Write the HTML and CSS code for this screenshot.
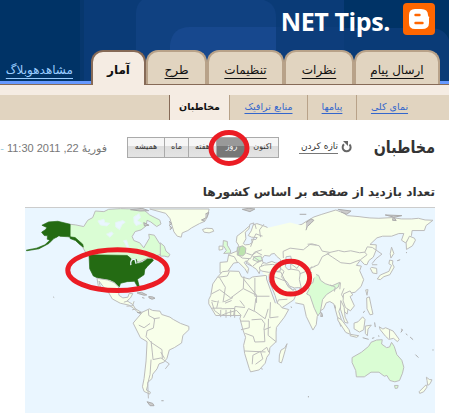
FILE: index.html
```
<!DOCTYPE html>
<html lang="fa" dir="rtl">
<head>
<meta charset="utf-8">
<title>NET Tips.</title>
<link rel="stylesheet" href="styles.css">
</head>
<body>
<header class="header">
  <svg class="header-art" width="449" height="84" viewBox="0 0 449 84">
    <path fill="#036" d="M0 0h449v84H0z"/>
    <path fill="#07376d" d="M80 0h4v84h-4z"/>
    <path fill="#0a3b77" d="M84 0h260v28h86q15 0 19 12v44H84z"/>
    <path fill="#104181" d="M136 84V13q0-8 6-13h122q12 4 12 17v67z"/>
    <path fill="#17488e" d="M170 84V45q2-18 20-18h86v57z"/>
    <path fill="#0d3d7b" d="M276 27h68v57h-68z"/>
  </svg>
  <div class="brand">
    <svg class="logo" width="32" height="32" viewBox="0 0 32 32">
      <rect width="32" height="32" rx="4" fill="#f60"/>
      <path fill="#fff" d="M12 6h6q7 0 7 6 0 2 1.500 2Q26 14 26 16v4q0 6-7 6h-7q-6 0-6-6v-8q0-6 6-6z"/>
      <path stroke="#f60" stroke-width="2.400" stroke-linecap="round" d="M12.500 12h4M12.500 20h7"/>
    </svg>
    <h1 class="title" dir="ltr">NET Tips.</h1>
  </div>
  <nav class="tabs">
    <a class="tab post">ارسال پیام</a>
    <a class="tab comments">نظرات</a>
    <a class="tab settings">تنظیمات</a>
    <a class="tab design">طرح</a>
    <a class="tab stats active">آمار</a>
    <a class="view">مشاهدهوبلاگ</a>
  </nav>
</header>
<nav class="subnav">
  <a class="sub overview">نمای کلی</a>
  <a class="sub posts">پیامها</a>
  <a class="sub traffic">منابع ترافیک</a>
  <a class="sub audience">مخاطبان</a>
</nav>
<main>
  <div class="toolbar">
    <h2 class="heading">مخاطبان</h2>
    <svg class="refresh" width="11" height="12" viewBox="0 0 11 12">
      <path fill="none" stroke="#666" stroke-width="2" d="M8.500 3.500A4 4 0 1 1 3 3.300"/>
      <path fill="#666" d="M2 0h5v5z"/>
    </svg>
    <a class="reload">تازه کردن</a>
    <div class="range">
      <span class="now">اکنون</span><span class="day">روز</span><span class="week">هفته</span><span class="month">ماه</span><span class="all">همیشه</span>
      <svg class="ring" width="42" height="38" viewBox="0 0 42 38"><ellipse cx="21" cy="19" rx="18" ry="15.500"/></svg>
    </div>
    <span class="date">فوریهٔ 22, 2011 11:30 <i>-</i></span>
  </div>
  <h3 class="caption">تعداد بازدید از صفحه بر اساس کشورها</h3>
  <svg class="map" width="410" height="206" viewBox="25 207 410 206">
    <g transform="translate(20 200) scale(.33333)">
      <path class="visited" d="M148 70l17 2 24 5 12-19 15-8 8-20 26 2 14-7 36-2 44 1 28 4 16 14 30 15 4 12-13 8-18-14-11-5-3 17-15 12-18 5-9 15 5 12 18 7 12 15 17-29-2-12 17 3 15 24 15 16 1 10-17 10-17 3-28 11-14 7-17-4-20-14-120-3-17-28-22-22-18-5z"/>
      <path class="ice" d="M232 60l18-5 2 10 15 2-8 8-20-3zM285 65l22-6 7 5-9 6-8 16-11-8zM258 100l15-7 5 6-10 10zM309 120l8 14 5 17 6-3-10-30zM340 48l16-10 4 12-10 9 14 8-17 7-6-10z"/>
      <path class="usa" d="M205 162l115 2 10 8 4 12 2-8 12 0 2 13 15-4 16-10 15-1 3 5-18 18-8 10-2 15-20 14 5 20-5 2-9-16-22 1-20 5-4 11-14-14-13-7-33-4-18-8-11-22z"/>
      <path class="usa" d="M148 70l-37-9-28 2-20 10 15 7-4 6-12 8 8 10 10 1-1 10 8 3-15 14-25 10-31 6 1 2 37-6 30-16 15-15 15-7 34 2 15 2 23 20 2 9-10-7-14-13-16-6z"/>
      <path class="lake" d="M96 124l20-17M331 193q-3-18 12-18M343 174l4 15"/>
      <path class="land" d="M229 233l32 5 20 8 13 13 1 25 12 8 15-2 4-11 11 0-7 13-10 9 17 11 8 13 17 10 14 0-5 6-15-2-16-15-14-10-27-6-24-13-11-19-17-19-12-16 6 26-8-12zM310 305l13-4M318 317l18-1 5-14M335 328l12-3"/>
      <path class="isle" d="M350 277l13-2 16 8-8 1-17-5zM385 288l12 1 7 4-9 3-9-4zM365 291l7 2M97 289l3 2M330 26l29 4 26-1-20-7zM370 65l16 8-14 2z"/>
    </g>
    <g transform="translate(160 200) scale(.33333)">
      <path class="visited" d="M0 126l12 10 5 15 12 10-5 8-12-3-12 0z"/>
      <path class="land" d="M-32 24H147l-5 23-8 14-16 7-24 13-11 8-17 7-3 13-12-3-10-13-6-20-6-20-13-16z"/>
      <path class="isle" d="M26 61l9 7-8 5 8 8-6 6M136 39l10-5-6 16-16 7 10 4M247 25l20-3 18 2-15 8z"/>
      <path class="land" d="M127 86l12-4 18 1 4 8-14 5-15-2zM177 136l12 0-1 10-11 2z"/>
      <path class="visited" d="M190 119l12 3 0 11 10 17-1 7-20 1 8-9-4-7-6-8z"/>
      <path class="land" d="M180 185l22-2 4-22 25-10 5-18-7-10 2-17 22-17 13-12 25-9 18 6 13 5 5 12-17-3 2 12 12 2 12-10 15-11 25-5 23 5 28-9 25-15 10 5v110H371l-12 10-16 3-22-4-14 8-5 14-4 16-8-13-13-9-19-17-5 6 13 17-3 15-8-14-19-19-15 2-13 18-8 14-20-2z"/>
      <path class="sea" d="M250 128l8-14-2-20 11-10 3-14 12-4-8 24-9 14 10 5 17 1-4 6-13-1 2 10-9 6-12 1z"/>
      <path class="germany" d="M232 140l16-5 10 7-2 16-8 8-16-3z"/>
      <path class="visited" d="M283 168l20-2 5 13-17 3-12-5z"/>
      <path class="land" d="M353 325L320 235l0-11-42 5-10 6-23-6-8-17-31-1-19 2-15 17-14 20-6 35-6 12 0 13 21 35H370z"/>
      <path class="border" d="M172 230l30-4 6-13M154 280l25-13 33 25M178 230l18 30-7 45M212 292l38-28 2-37M250 264l40 20v43M285 232v55h44M250 234l40 50M154 300l30 8 35-17M233 186l-10-18-17-5M241 136l-7 26 13 10 24 2 13-20 22-7M272 138l9-24 7-15 20 7 8-9M289 84l-4-15M302 109l-3-22 13-17M278 166l20 14-19 16M259 157l17 6 14-9 17 9M269 172l-11 15 17 9M309 178l-17 8"/>
    </g>
    <g transform="translate(300 200) scale(.33333)">
      <path class="land" d="M-30 84l17-8 20-6 12-8 24-14 24-8 42-13 23 9 12 8 35 3 15 2 18 2 27 1 40-2 28 4 31 0 20-2 20 5 24 1-21 16-5 15-37 0-2 15-18 22-12-8 7-20-15 0-22 8-27 0-17 5-21 20 19 1-1 17-8 20-14 11-5 12-8-1-12-13-12 16 15 2-5 14 12 27-8 21-18 17-23 4-7 20 11 15-5 27-20-21-5 13 12 38-6 7-10-28-11-40-12-7-11 4-8 18-10 6-9 17-3 25-10 16-20-41-8-36-25-5"/>
      <path class="visited" d="M45 221l12 3 6 15 14 10 20 7 24-11-5 15-18 11-17 11-12 15-7 39-7 10-11-23-13-38-10-5 8-15-7-10 18-9z"/>
      <path class="border" d="M0 133l37-4 22 6 9 16 23 4 26-6 17 4 20-3 27 6 15-2 7 8-20 15-31 12-28-3-24-16-18-12M196 155l8-17 15 2 29 20-18 14-12 15M92 155l-24 13-12 24-24 10 21 22M92 253l15 6-2 14M123 246l-2 20M134 263l-8 19 11 19M218 192l16 0"/>
      <path class="land" d="M346 112l-15-6-10 20 1 20 18-11 9-17zM277 139l-4 20 2 13 9-14zM281 180l-10-2-2 11 8 5-8 18-26 11-9 12 9 2 11-9 18-6 13-23-5-9zM217 200l15 3 1 16-13-2-7-14zM199 268l7-1-3 17zM202 292l8-3 7 34 4 18-9 2-9-18z"/>
      <path class="land" d="M115 351l12 8 22 29 4 14-14-6-24-37zM124 300l10 20 3 30 9 18-10-2-13-40zM132 280l20-9 8 12-8 5 13 28-12 15-15-10-7-20zM154 402l24 4-6 5-20-5zM164 368l12-4 14-15 7 8-4 31-13 7-16-10zM198 377l18-3-10 12-2 20-6-7zM240 379l11 7 8-4 23 10 18 25-5 7-12-10-14 3-10-9-16-20zM271 389v26"/>
      <path class="isle" d="M0 40l20 0M19 65l15-11 9 4-8 8-12 11-4 11M115 25l40 5-13 10-17-7M258 42l50 2-24 5 7 10-11-1 2-10zM294 180l9-3M322 154v3M226 366l2 14M190 412l18 5M218 414l7-2M238 405l1 4M305 396l5-7-3-4M320 400l5 4M333 410l9 8M349 463l9 9M62 335l5 3 2 10-7-1M106 314l2 10M192 337l4-6M400 449h4M25 590h3"/>
      <path class="visited" d="M277 426l8 12 8 25 15 17 6 21-4 18-9 22-14 4-15-4-9-15-8 2-16-12-24 0-20 14-24 0-2-19-11-24 0-15 28-16 22-18 7-12 17-7 17-1-2 13 15 11 9-2zM286 556l11 0-2 8-7 1z"/>
      <path class="land" d="M382 531l9 7 8 1-6 12-7 5-2-15zM381 554l3 7-10 14-12 5-2-5z"/>
    </g>
    <g transform="translate(225 205) scale(.33333)">
      <path class="fill" d="M110 70l86-20 40 10 14 60 26 90-24 20-14 22-20-3-33-4-29-22-42-19-2-29 50-10-35-8-8-30z"/>
      <path class="land" d="M104 184l15-6 25-2 24 7-2 13-34 4-22-4-6-6zM133 207l6-10 29 2 14 28 8 16 16 12 10 9-9 19-36 24-10-3-10-34-18-45z"/>
      <path class="sea" d="M114 170l-2-12 7-9 16 2 4-6 10-2 6 8 12 10 2 11-16 0-12-5-16 6zM184 153l14-2 2 9-8 5 6 9 0 17-8 1-8-9zM180 223l8 7 6 11 15 6 12-1 12 3-6 12-12-4-4-7-8 2-16-15z"/>
      <path class="border" d="M164 185l14 12-8 16 12 14M198 190l24 4 5 9-3 18 6 27-8-2M224 205l20-8 18 4M248 233l12-20M176 157l-1-20 21-10 40 5 20-16 20 2M198 174l19 14 9-14 28 14 18-6M262 182l-10 18M155 300l6-17 27-2M134 222l16-8 36 14"/>
    </g>
    <g transform="translate(20 300) scale(.33333)">
      <path class="land" d="M366 35l21-10 10 5 22 2 5 10 25 8 10 7 22 12 25 9 0 10-18 17-4 23-22 14-15 7-7 25-8 11-16 6-6 15-13 16-2 13-13 12 0 8-4 15 12 6-2 6-17-8-5-14 5-25 6-53 3-58-20-12-22-44z"/>
      <path class="border" d="M384 27l1 18 18 10-4 28-19 8-3 18 15 17 33 22 1 28M355 74l16 8 18-13M399 55l19-3M392 122l4 36 2 20 24-5 25 18-12 15M392 178l-3 45-7 27 2 45M433 175l-12-20"/>
      <path class="isle" d="M380 305l17 5 4 7-12 0zM423 302h7M350 36l12 0"/>
    </g>
    <g transform="translate(200 300) scale(.33333)">
      <path class="land" d="M232 8l7 4 8 10 20 5-13 23-24 31-1 14 0 29-19 18-1 18-8 11-5 18-18 20-26 6-4-10-14-46-3-24 6-24-8-23-9-34 3-10-13-14-24 6-23 9-20-15-8-26"/>
      <path class="land" d="M262 130l-5 18-8 28-4 12-7-3 1-21 5-15 11-6z"/>
      <path class="border" d="M133 152l64 3M136 99l24 9 5 17 30-1-2-36 20-8M155 58l30-2 10 14-3 18M205 25l-9 30-33-24 5-38M212 5l-2 47 26-3M206 55l-1 50 25 20M122 62l26 0 0 20-25 6M131 52l15-28 18 9M101 45l4-27 30 3M64 25l40-1v28M62 50V28M92 50V28M78 52V28M35 23h30M157 192l2-27 23-12 7 23-22 16M185 153l16-12 6 15M183 205l6 2M120 0l14 18M55 0l-5 22M75 8l20-8"/>
      <path class="isle" d="M273 19l4 2M325 290h2"/>
    </g>
    <ellipse class="mark" cx="117" cy="269.500" rx="50" ry="20.500"/>
    <ellipse class="mark" cx="291" cy="277" rx="19" ry="16.500"/>
  </svg>
</main>
</body>
</html>
```
FILE: styles.css
```
* { box-sizing: border-box; }
body {
  margin: 0;
  width: 449px;
  height: 420px;
  overflow: hidden;
  background: #fff;
  font-family: "DejaVu Sans", sans-serif;
  color: #333;
}
h1, h2, h3 { margin: 0; }
a, span, h2, h3 { white-space: nowrap; }
.header {
  height: 85px;
  position: relative;
  display: flex;
  flex-direction: column;
  border-bottom: 1px solid #866a57;
}
.header-art { position: absolute; left: 0; top: 0; }
.brand {
  position: relative;
  display: flex;
  height: 50px;
  padding: 3px 14px 0 0;
  gap: 13px;
}
.title {
  color: #fff;
  font: bold 25px/36px "Open Sans", sans-serif;
  letter-spacing: -.4px;
}
.tabs {
  position: relative;
  display: flex;
  height: 34px;
  padding-right: 9px;
  border-bottom: 3px solid #69f;
  color: #111;
}
.tab {
  height: 34px;
  background: #e1d4c0;
  border: 2px solid #b8a289;
  border-bottom: 0;
  border-radius: 12px 12px 0 0;
  text-align: center;
  font-size: 12px;
  line-height: 36px;
  text-decoration: underline;
  text-underline-offset: 4px;
}
.post { width: 86px; }
.comments { width: 70px; }
.settings { width: 77px; }
.design { width: 61px; }
.stats { width: 55px; }
.active {
  height: 35px;
  background: #f5ece3;
  border-color: #866a57;
  font-weight: bold;
  text-decoration: none;
}
.view {
  width: 91px;
  padding-right: 18px;
  color: #9cf;
  font-size: 12px;
  line-height: 41px;
  text-decoration: underline;
  text-underline-offset: 4px;
}
.subnav {
  height: 35px;
  padding-right: 15px;
  border-top: 10px solid #f5ece3;
  background: #e1d4c0;
  display: flex;
}
.sub {
  height: 25px;
  border-left: 1px solid #b8a289;
  color: #36c;
  font-size: 9.500px;
  line-height: 24px;
  text-align: center;
  text-decoration: underline;
  text-underline-offset: 3px;
}
.overview { width: 78px; padding-right: 12px; }
.posts { width: 49px; }
.traffic { width: 78px; }
.audience {
  width: 60px;
  color: #111;
  background: #f5ece3;
  border-color: #866a57;
  font-weight: bold;
  text-decoration: none;
}
.toolbar {
  height: 61px;
  padding-right: 14px;
  display: flex;
  align-items: flex-start;
}
.toolbar > * { flex-shrink: 0; }
.heading {
  width: 61px;
  margin: 13px 0 0 22px;
  font-size: 17px;
  line-height: 28px;
  transform: scaleX(.84);
  transform-origin: right;
}
.refresh { margin: 21px 0 0 3px; }
.reload {
  width: 39px;
  margin: 19px 0 0 20px;
  font-size: 9px;
  line-height: 14px;
  border-bottom: 1px solid #777;
}
.range {
  position: relative;
  display: flex;
  height: 21px;
  margin: 17px 0 0 20px;
  border: 1px solid #aaa;
}
.range span {
  text-align: center;
  font-size: 8px;
  line-height: 18px;
  border-left: 1px solid #aaa;
  background: linear-gradient(#f6f6f6 0 40%, #ddd 40%, #e4e4e4);
}
.now { width: 32px; }
.range .day { width: 30px; color: #fff; background: linear-gradient(#999 0 40%, #777 40%, #777); }
.week { width: 28px; }
.month { width: 24px; }
.range .all { width: 36px; border-left: 0; }
.ring { position: absolute; left: 80px; top: -9px; }
.ring ellipse, .mark { fill: none; stroke: #eb1c24; stroke-width: 5; }
.date { margin-top: 18px; font: 11px/20px "Liberation Sans", "DejaVu Sans", sans-serif; color: #777; }
.date i { color: #9cd; font-style: normal; }
.caption {
  height: 26px;
  padding-right: 14px;
  font-size: 12.150px;
  line-height: 22px;
}
.map {
  display: block;
  margin-right: 14px;
  background: #eaf6ff;
  border-top: 1px solid #ccc;
}
.map path { stroke: #bbb; stroke-width: 3; stroke-linejoin: round; }
.map .land { fill: #f8ffea; }
.map .fill { fill: #f8ffea; stroke: none; }
.map .sea { fill: #eaf6ff; }
.map .visited { fill: #dafdd4; }
.map .germany { fill: #bce3ad; }
.map .usa { fill: #246b13; stroke: #246b13; stroke-width: 2; }
.map .ice { fill: #eaf6ff; stroke: #e6f6f6; }
.map .lake { fill: none; stroke: #eaf6ff; stroke-width: 4; }
.map .border { fill: none; }
.map .isle { fill: #ccc; stroke: #aaa; }
```
